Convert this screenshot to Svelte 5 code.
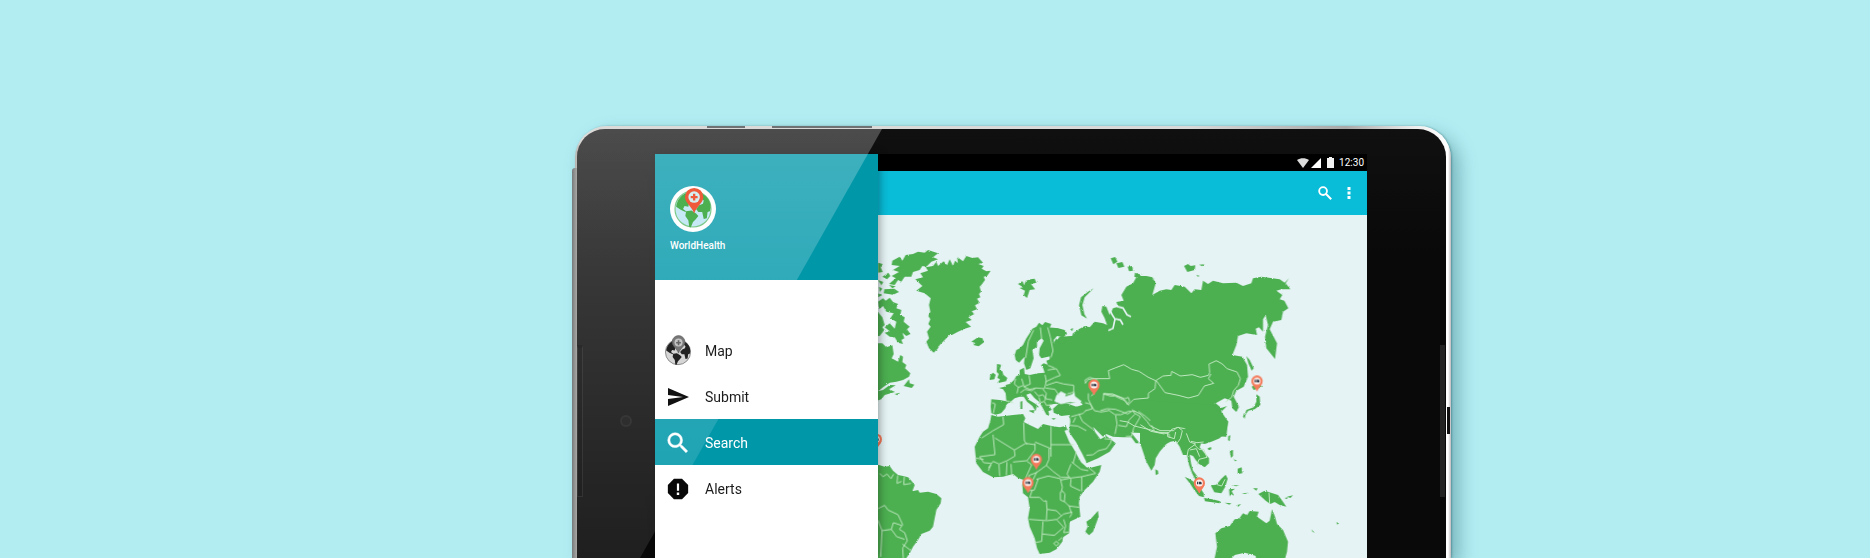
<script>
  const items = [
    { id: 'map', label: 'Map' },
    { id: 'submit', label: 'Submit' },
    { id: 'search', label: 'Search' },
    { id: 'alerts', label: 'Alerts' }
  ];
  let active = $state('search');

  // Pin centres, in map units
  const pins = [
    [20, 630], [500, 690], [475, 760], [673, 467], [1162, 455], [989, 761]
  ];
</script>

{#snippet globe(sea, land, edge)}
  <circle cx="30" cy="30" r="23.500" fill={sea} stroke={edge} stroke-width="1.500" />
  <path fill={land} d="M8 27C9 19 14 12 21 9l5 3-1 8-1 7-5-1-2 4 4 3-1 1-6-3zM21 33l7-1 6 4 3 3-4 5-3 3-3 7-2-1-1-8-4-6zM38 25l5-2 1-4-4-4 2-5c7 4 11 10 11 18l-1 5-3 1-1 8-4 1-2-9-5 0-3-4z" />
{/snippet}

<main class="hero">
  <div class="device">
    <i class="edge-left"></i>
    <i class="key key-a"></i>
    <i class="key key-b"></i>
    <i class="slot"></i>
    <div class="bezel">
      <i class="speaker speaker-left"></i>
      <i class="speaker speaker-right"></i>
      <i class="camera"></i>
      <div class="screen">
        <nav class="drawer" aria-label="Main">
          <header>
            <svg class="logo" viewBox="0 0 60 60" aria-hidden="true">
              <circle cx="30" cy="30" r="30" fill="#fff" />
              {@render globe('#c5eaf5', '#4caf50', '#7dc98b')}
              <path fill="#ee5a3a" d="M31.500 36C28 26 19.500 22 19.500 14.500a12 12 0 0 1 24 0C43.500 22 35 26 31.500 36z" />
              <circle cx="31.500" cy="14.500" r="7.500" fill="#d5eef0" />
              <path fill="#ee5a3a" d="M30 10h3v3h3v3h-3v3h-3v-3h-3v-3h3z" />
            </svg>
            <strong>WorldHealth</strong>
          </header>
          <ul>
            {#each items as item}
              <li>
                <button class:active={active === item.id} onclick={() => (active = item.id)}>
                  {#if item.id === 'map'}
                    <svg class="world" viewBox="4 -2 52 58" aria-hidden="true">
                      {@render globe('#d6d6d6', '#222', '#777')}
                      <path fill="#777" stroke="#555" d="M31 32C28 23 19 19 19 11a12 12 0 0 1 24 0c0 8-9 12-12 21z" />
                      <circle cx="31" cy="12" r="7.500" fill="#c4c4c4" />
                      <path fill="#666" d="M29.500 8h3v3h3v3h-3v3h-3v-3h-3v-3h3z" />
                    </svg>
                  {:else if item.id === 'submit'}
                    <svg viewBox="0 0 24 24" aria-hidden="true"><path fill="#111" d="M2 21l21-9L2 3v7l15 2-15 2z" /></svg>
                  {:else if item.id === 'search'}
                    <svg viewBox="1.500 1.500 21 21" aria-hidden="true"><path fill="currentColor" stroke="currentColor" stroke-width=".4" d="M15.500 14h-.79l-.28-.27A6.470 6.470 0 0 0 16 9.500 6.500 6.500 0 1 0 9.500 16c1.610 0 3.090-.59 4.230-1.570l.27.28v.79l5 4.990L20.490 19l-4.990-5zm-6 0C7.010 14 5 11.990 5 9.500S7.010 5 9.500 5 14 7.010 14 9.500 11.990 14 9.500 14z" /></svg>
                  {:else}
                    <svg viewBox="1 1 22 22" aria-hidden="true"><path fill="#080808" d="M8.300 2.700h7.400l5.600 5.600v7.400l-5.600 5.600H8.300l-5.600-5.600V8.300z" /><path fill="#fff" d="M11 7h2v6.500h-2zM10.900 15.300h2.200v2.200h-2.200z" /></svg>
                  {/if}
                  <span>{item.label}</span>
                </button>
              </li>
            {/each}
          </ul>
        </nav>

        <section class="app">
          <div class="status">
            <svg class="wifi" viewBox="0 0 24 20" aria-hidden="true"><path fill="#ddd" d="M0 4C7-1 17-1 24 4L12 20z" /></svg>
            <svg class="signal" viewBox="0 0 20 20" aria-hidden="true"><path fill="#fff" d="M0 20L20 0v20z" /></svg>
            <svg class="battery" viewBox="0 0 14 22" aria-hidden="true"><path fill="#f2f2f2" d="M4 0h6v2h4v20H0V2h4z" /></svg>
            <time>12:30</time>
          </div>
          <div class="bar">
            <button aria-label="Search">
              <svg class="find" viewBox="3 3 18 18" aria-hidden="true"><circle cx="9.500" cy="9.500" r="5" fill="none" stroke="#fff" stroke-width="2.400" /><path stroke="#fff" stroke-width="2.600" d="M13 13l7 7" /></svg>
            </button>
            <button aria-label="More options">
              <svg class="more" viewBox="0 0 4 14" aria-hidden="true"><path fill="#fff" d="M.5 1h3v3h-3zM.5 5.500h3v3h-3zM.5 10h3v3h-3z" /></svg>
            </button>
          </div>
          <svg class="atlas" viewBox="25 -45 1468 1029" preserveAspectRatio="xMinYMin slice" role="img" aria-label="World map with health reports">
            <defs>
              <filter id="coast" x="-5%" y="-5%" width="110%" height="110%" color-interpolation-filters="sRGB">
                <feTurbulence type="fractalNoise" baseFrequency="0.25" numOctaves="2" seed="4" />
                <feDisplacementMap in="SourceGraphic" scale="6" xChannelSelector="R" yChannelSelector="G" />
              </filter>
            </defs>
            <g class="land" filter="url(#coast)">
              <!-- Greenland, Arctic Canada, Brazil -->
              <path d="M137 148L160 142 152 130 175 122 168 112 190 108 200 95 205 108 222 94 232 106 240 88 250 108 256 92 265 100 262 80 280 94 290 78 308 84 325 82 340 98 326 102 342 108 336 116 350 124 363 122 352 138 342 140 346 150 335 165 330 170 334 185 328 192 332 202 322 206 330 218 316 226 322 238 306 244 314 252 296 262 306 270 288 276 304 290 285 296 265 305 245 316 240 314 225 330 210 345 204 356 192 368 178 355 170 335 178 325 172 305 183 290 176 282 182 268 176 258 182 245 178 225 183 205 165 190 140 182 158 168z" />
              <path d="M68 92L90 80 98 92 108 75 130 72 145 65 165 68 175 60 205 70 190 82 205 88 185 95 170 110 158 108 150 120 130 126 125 140 105 140 95 155 85 150 75 165 58 162 78 145 66 138 88 126 70 120 90 108 66 105z" />
              <path d="M25 98l14 4-6 10 6 14-14 2zM38 140l18-12 6 10-10 10zM25 150l16 6-6 10zM44 178l30-2 14 10-18 8-28-4zM28 170l10 6-8 10zM58 165l20 4-10 6zM25 190l12 6-12 6z" />
              <path d="M25 215L40 205 48 212 60 203 70 216 85 222 80 235 95 240 92 255 105 262 102 275 120 290 112 298 122 312 110 318 98 308 104 325 95 330 100 342 85 338 75 322 60 320 45 308 60 304 45 292 60 280 75 296 80 275 62 265 72 250 50 245 40 228 28 238z" />
              <path d="M0 255L25 246 38 262 45 285 38 292 44 300 30 318 0 320zM0 340L38 340 50 352 68 346 72 372 66 385 85 395 92 375 100 380 98 396 110 405 106 415 122 430 118 440 100 450 80 455 60 458 40 472 25 484 40 480 60 465 78 466 58 478 76 486 45 495 35 508 0 520z" />
              <path d="M102 468L118 448 120 460 134 464 126 474zM75 492l16-4-8 8zM305 335l12-8 8-5 13 3 5 12-16 12-16-4 6-6zM445 162l14-8 4 12 6-14 14-4 12-2 5 12-16 4 12 16-16 2-8 24-10-8 4-14-16-8 10-2z" />
              <path d="M0 705L28 705 45 710 60 708 70 722 85 735 100 738 115 742 125 752 135 765 128 784 145 780 150 788 175 785 200 792 215 805 213 820 200 840 195 865 190 890 180 902 155 912 145 930 130 950 120 970 110 984 0 984z" />
              <!-- British Isles -->
              <path d="M382 402l12 2-4 16 8 4 3 10 12 10-4 10-26 6 8-12-8-4 4-12-6-6zM362 435l8-7 8 6-4 14-14 2z" />
              <g transform="translate(330 210)">
                <!-- Europe -->
                <path d="M35 298L60 300 80 304 78 280 70 268 58 264 75 260 80 254 90 252 103 240 110 228 120 225 120 210 133 203 135 222 150 225 175 220 195 218 190 203 184 196 192 190 204 194 200 182 215 176 205 150 240 110 400 100 400 330 320 312 300 308 222 312 208 316 216 330 206 334 210 348 200 344 188 322 178 305 165 295 152 280 140 284 148 300 168 312 178 322 170 322 168 334 158 318 142 305 132 290 120 290 105 295 92 306 82 312 76 326 64 340 48 344 35 340 33 320z" />
                <path d="M105 165L110 150 118 146 130 135 140 115 150 100 158 86 170 80 178 68 188 76 196 66 215 72 210 84 235 85 255 90 262 102 250 112 232 108 222 120 226 150 215 168 185 175 178 165 180 145 192 122 186 115 172 125 172 140 158 150 162 175 152 205 140 210 133 190 135 170 118 188 108 180z" />
                <path d="M122 305l6-2v24h-6zM146 332l18-2-2 10zM216 354l14 2-10 3zM266 350l10-2-6 6z" />
                <path d="M220 326L236 312 260 310 290 320 330 308 400 330 480 430 468 430 455 412 430 412 400 410 380 402 370 410 355 395 340 380 346 396 362 418 380 408 408 430 390 455 355 475 320 490 305 465 290 430 268 395 272 365 270 345 245 348 222 338z" />
                <!-- Africa, Madagascar -->
                <path d="M35 345L55 350 75 348 100 345 130 342 137 355 132 366 150 375 175 387 190 372 215 378 240 382 258 378 264 390 256 394 270 420 285 450 300 478 320 502 330 504 365 495 360 515 340 545 315 570 300 590 298 610 302 650 270 665 268 700 250 712 248 725 230 748 210 758 180 762 172 745 165 715 150 680 145 655 150 625 145 592 130 580 128 555 132 540 115 534 100 522 70 530 40 532 10 516 -10 490 -15 440 0 410 10 395 25 385 32 362z" />
                <path d="M355 632L357 650 340 695 328 706 317 695 324 680 320 665 335 655z" />
              </g>
              <g transform="translate(540 30)">
                <!-- Russia and Central Asia -->
                <path d="M0 330L20 295 30 312 45 310 50 290 65 296 70 280 90 266 105 258 120 262 135 245 160 250 172 255 165 235 155 215 158 198 170 200 180 225 190 205 205 200 200 186 222 182 215 165 230 140 250 130 262 108 290 108 308 112 318 130 308 165 330 152 350 148 365 150 375 135 405 140 425 160 435 148 455 150 460 122 475 132 490 122 520 130 560 128 580 138 605 130 610 115 635 110 690 118 705 128 718 115 708 130 722 148 695 148 680 152 698 165 690 178 704 182 716 205 700 215 695 240 670 245 660 268 682 310 676 357 650 325 646 290 655 255 648 226 640 238 640 275 628 262 618 266 622 285 590 280 565 288 560 315 548 345 578 350 592 375 595 410 582 440 560 452 552 470 568 500 560 516 548 505 545 482 525 475 498 490 515 504 532 498 515 515 535 545 530 590 190 575 130 545 90 480 0 400z" />
                <path d="M132 145L105 172 98 195 104 222 112 236 95 226 88 196 94 172 115 155zM183 55l14-4 6 14-12 8zM200 70l18-4 6 14-18 4zM234 80l14-2 2 14-12 2zM256 98l18 6-8 10-12-4zM403 78l12-6 8 6 14-2-2 14-22 6zM448 74l16-1-6 6zM440 104l10 4-6 2zM-10 262l30 2 30 12-8 14-34-8zM62 268l8-4-2 10z" />
                <path d="M590 348L600 360 612 385 606 392 596 370zM606 440l14-8 18 6-14 8-12 4zM620 463L630 470 632 495 615 508 596 512 584 528 590 510 612 502 620 485z" />
                <path d="M583 520l5 2-3 14-5-6z" />
              </g>
              <g transform="translate(840 510)">
                <!-- China, India, Indochina -->
                <path d="M-30 0L190 15 215 40 235 65 228 95 210 115 185 125 165 132 154 130 150 142 165 160 178 175 178 190 165 202 148 192 138 180 130 168 120 164 124 190 130 212 145 232 150 248 138 240 128 222 118 195 112 165 100 165 90 140 78 122 62 125 50 132 30 155 18 175 15 195 5 212 -10 185 -25 140 -30 130z" />
                <path d="M17 208l8 4 1 10-8 3zM174 145l10-4 1 7-8 3zM236 108l6-2-2 18-5-4zM240 152l10-2 0 18-6 6zM252 178l10 4-6 2zM264 206l12-4 2 18-14 2z" />
                <path d="M105 230L118 236 132 245 150 262 162 280 163 292 148 288 132 268 122 252zM163 294l25 4 24 6-2 6-44-6zM183 256L200 254 215 236 228 224 234 236 226 262 215 280 194 277zM238 268l18-2-10 8 8 14-10-6-4 8zM225 308l20 2-6 4zM260 316l14-4-8 8zM276 280l20-2-10 4zM310 265l14 0-4 7z" />
                <path d="M326 282L345 272 385 285 396 300 410 320 390 315 375 306 362 312 348 302zM245 256l24 0-10 3zM405 294l10-2-4 6zM412 290l18-4-8 8zM485 388l10 10-6-2zM560 367l8 2-5 5z" />
                <path d="M195 474L202 440 197 400 215 385 240 378 255 358 268 356 280 340 292 346 300 333 327 335 322 350 350 370 360 362 367 328 376 350 382 372 400 390 415 425 412 455 405 480 320 480 318 468 300 462 285 458 255 465 240 480z" />
              </g>
            </g>
            <!-- Inland seas and gulfs -->
            <g class="sea" transform="translate(330 210)">
              <path d="M224 304l6-18 14-12 16 8-4 8 22-8 6-8 2 14 20 16-6 8-28-6-28 6zM255 392l8-2 8 16 16 18 20 36 12 24-2 12-12-8-20-38-16-24z" />
            </g>
            <g class="inlet" transform="translate(540 30)">
              <path d="M178 203l10 22 8 12-6 28-14 6M196 236l16 4 8 14M198 198l22 6 12 20 12 6" />
            </g>
            <!-- Borders -->
            <g class="borders">
              <path d="M30 730l10 10 12-8 12 14 8-14M84 736l-2 24 14-6M104 740l-2 24 22-4M25 836l20-10 10 14 30 14 14 30-10 14 16 10 8 24-14 22 2 32M25 870l12 32 28-4 6-20 24 8M37 902l-4 78M65 898l16 22 24 8M98 942l26 20" />
              <g transform="translate(330 210)">
                <path d="M162 90l-16 34-8 50M182 82l4 36M204 82l8 30 8 40-6 20M37 308l10 4-6 28M78 302l22 6M108 236l-4 16 12 10-4 18M116 262l16-6-6-20M148 226l4 26-20 8 18 8 20-4 24 2 6-22-4-20M122 278l14-10 20 4 12-8M164 274l12 14 14-4 8 12 20 4M190 268l10 12-4 22M196 246l30-14 16-6-12-20-26 4M200 256l30-10 22 6 30 4 0 20-20 6M198 264l28 4 12 18M178 292l4 16 12-4 6 12 16-2M205 196l20 8" />
                <path d="M70 350l2 24-32 18-34 22M40 404l6 60-46 6M46 414l58 36 34-20 28 4M132 368l2 54 8 12M214 378l0 92M214 434l68 0M166 426l48 20M166 430l0 20-24 32-42 4M104 450l2 18-24 14-24 10-18-8-14 20M0 470l12 18 22 2M-14 474l26 4M34 494l-8 18M58 494l2 34M82 486l-2 40M94 492l2 34M142 484l14 10-18 40M208 446l0 32-8 18-30 22-22 8 4 26M200 496l20 18 24 18 24 0M172 514l-16 34-24-4M170 538l36-10 36 8 6 26-4 16M158 570l-8 22 30 0 12 12 8-2 2 26 28 4 14 14M146 572l18-2 12-34M148 658l54 4 30-4 20-16 26-6M202 628l-2 32M190 664l-4 60-22 4M188 702l36 4 28-24-20-22M252 658l6 20-6 20 16-2M244 540l30-6 32-4M274 492l-12 30 12 16-2 20 30 14M276 486l28 22 22 4M246 570l10 12-2 22 14 14 32 4M256 606l-14-6 0-24M268 616l8 26-6 10M290 456l-10 34M248 712l-12 10M222 730l8-6 8 6-8 8-8-8M326 502l22 18-42 10 0 44" />
                <path d="M316 308l16 4 6 14-20 6M320 330l-10 10-36 10M298 342l10 22 32 24M280 368l8-16M270 376l24 2 26 14M326 280l0 18 8 16 10 18 20 4 22-4M318 250l-2-10 14-8 24 8M334 288l10-8M370 302l2-20 20 6 14 0 16 8 16 6 10 14M372 280l34 6 30 10 10-4 4 12-8 8M386 330l20 14 18 0 22-10 20 0M362 332l20-6 26 2 36 14 12-8M408 346l4 26-6 30M416 376l24 4 8-20 18-18-8-14M466 340l16 10-20 34-6 24-18 2M476 334l20 14 16 14M320 466l20-2 16-12 24-6M380 446l12-16 4-12-22-2" />
              </g>
              <g transform="translate(540 30)">
                <path d="M106 430l10-12 20-2 44 0-4-24 20-8 26-10 24 14 22 6 28 18 22 10 22-14 24-2 2-12 26 14 36-4 24 8 24-6 4-8-2-26 22-10 18 10 14 14 30 10 10 20-6 20-14 16-6 20-18 14M320 422l26 36 40 8 30 8 30-8 18-28 28-8-16-14 8-14M318 422l-2 24-20 14 0 14-44 4-16 16M160 462l30 0 30 14 14 18M252 512l20 10 20 22 10 14 30 14 40 0 10-10 24 4M306 556l8 18 44 8 2 12" />
              </g>
              <g transform="translate(840 510)">
                <path d="M-90 62l24 4 20 12 50 12 24 8 30 0 8-10 20-6 12 10-6 24-10 14M-28 74l32 20 40 8M54 96l0 14 20 6 4-20M110 100l10 26 18 6-22 16-4 20M124 124l18 4 20-2M134 134l14 14 14 0 10 24-24 6-6 16M120 150l20-4 10 24M358 278l2 34M138 228l14 8M202 254l14 4 10-20" />
              </g>
            </g>
            {#each pins as [x, y]}
              <g transform="translate({x} {y})">
                <path fill="#f47b5c" d="M-16 3h32C13 13 5 18 1 28h-2C-5 18-13 13-16 3z" />
                <circle cy="-2" r="17" fill="#f47b5c" />
                <circle cy="-2" r="10.500" fill="#fbeeea" />
                <path fill="#333a48" d="M-7-6h4v8h-4zM-1-6h6l2 3v5h-8z" />
              </g>
            {/each}
          </svg>
        </section>
      </div>
      <i class="glare"></i>
    </div>
  </div>
</main>

<style>
  :global(body) { margin: 0; background: #b2edf2; }
  * { box-sizing: border-box; }
  .hero {
    display: flex;
    justify-content: center;
    min-height: 100vh;
    padding: 126px 0 0 156px;
    overflow: hidden;
    background: #b2edf2;
    font-family: Roboto, "Liberation Sans", sans-serif;
  }
  .device {
    position: relative;
    display: flex;
    flex: 0 1 876px;
    padding: 3px 5px 0 2px;
    border-radius: 32px 32px 0 0;
    background: linear-gradient(90deg, #b5b2af, #dcdad8 6px, #d8d8d8 70%, #a9a9a9 88%, #eee 96%, #fff calc(100% - 3px), #bfb9bd);
    box-shadow: 8px 8px 18px rgba(30, 95, 105, .4), 1px 0 2px rgba(30, 80, 90, .4);
  }
  .device i { position: absolute; }
  .edge-left { left: -3px; top: 42px; bottom: 0; width: 5px; border-radius: 3px 0 0; background: linear-gradient(90deg, #777b7c, #aaa9a6); }
  .key { top: 0; height: 2px; background: #707173; }
  .key-a { left: 132px; width: 38px; }
  .key-b { left: 197px; width: 100px; }
  .slot { right: 1px; top: 281px; width: 3px; height: 27px; background: #111; }
  .bezel {
    position: relative;
    flex: 1;
    display: flex;
    min-width: 0;
    padding: 25px 79px 0 78px;
    border-radius: 28px 28px 0 0;
    background: linear-gradient(#101010, #090909 30%);
    overflow: hidden;
  }
  .bezel .speaker { top: 216px; height: 152px; }
  .speaker-left { left: 0; width: 6px; background: #050505; border: 1px solid #1b1b1b; border-top: 3px solid #000; }
  .speaker-right { right: 1px; width: 5px; background: #232323; }
  .camera { left: 43px; top: 286px; width: 12px; height: 12px; border-radius: 50%; border: 2px solid #171717; background: #0d0d0d; }
  .glare {
    z-index: 2;
    inset: 0;
    pointer-events: none;
    background: linear-gradient(rgba(255, 255, 255, .25), rgba(255, 255, 255, .18) 40%, rgba(255, 255, 255, .09));
    clip-path: polygon(0 0, 305px 0, 63px 100%, 0 100%);
  }
  .screen { flex: 1; display: flex; min-width: 0; background: #e5f3f4; }
  .drawer {
    position: relative;
    flex: 0 0 223px;
    background: #fff;
    box-shadow: 1px 0 9px rgba(0, 0, 0, .4);
  }
  .drawer svg, .drawer strong, .drawer span { position: relative; z-index: 3; }
  header {
    display: flex;
    flex-direction: column;
    gap: 7px;
    height: 126px;
    padding: 32px 15px 0;
    background: #0097a9;
    color: #fff;
  }
  .logo { width: 46px; height: 46px; }
  strong { font-size: 10px; line-height: 14px; font-weight: 500; }
  ul { margin: 0; padding: 47px 0 46px; list-style: none; }
  li button {
    display: flex;
    align-items: center;
    gap: 13px;
    width: 100%;
    height: 46px;
    padding: 1px 9px 0;
    border: 0;
    background: none;
    color: #1c1c1c;
    font: 14px/20px Roboto, "Liberation Sans", sans-serif;
    text-align: left;
  }
  li button.active { background: #0097a9; color: #fff; }
  li svg { width: 24px; height: 24px; margin: 0 2px; }
  li svg.world { width: 28px; height: 31px; margin: 0; }
  .app { flex: 1; display: flex; flex-direction: column; min-width: 0; }
  .status {
    display: flex;
    align-items: center;
    justify-content: flex-end;
    height: 17px;
    padding-right: 3px;
    background: #000;
    color: #fff;
    font-size: 10px;
    line-height: 16px;
  }
  .wifi { width: 12px; height: 10px; margin-right: 2px; }
  .signal { width: 10px; height: 10px; margin-right: 6px; }
  .battery { width: 7px; height: 11px; margin-right: 5px; }
  .bar {
    display: flex;
    align-items: center;
    justify-content: flex-end;
    gap: 15px;
    height: 44px;
    padding-right: 16px;
    background: #09bcd8;
  }
  .bar button { display: flex; padding: 0; border: 0; background: none; }
  .find { width: 14px; height: 14px; }
  .more { width: 4px; height: 14px; }
  .atlas { flex: 1; display: block; width: 100%; min-height: 0; background: #e5f3f4; }
  .land { fill: #4caf50; }
  .sea { fill: #e5f3f4; }
  .inlet { fill: none; stroke: #e5f3f4; stroke-width: 5; }
  .borders { fill: none; stroke: #bfe8c0; stroke-width: 3; stroke-linejoin: round; }
</style>
